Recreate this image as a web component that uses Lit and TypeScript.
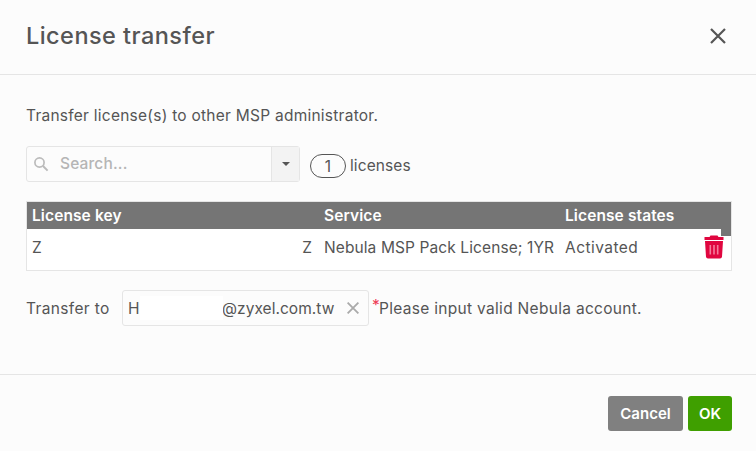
import { LitElement, css, html } from "lit";
import { customElement } from "lit/decorators.js";

@customElement("app-root")
export class AppRoot extends LitElement {
  render() {
    return html`
      <div class="dialog">
        <header class="dialog__header">
          <h1 class="dialog__title">License transfer</h1>
          <svg class="dialog__close" width="18" height="18" viewBox="0 0 18 18">
            <path d="M2 2L16 16M16 2L2 16" stroke="#555" stroke-width="2.2" fill="none" />
          </svg>
        </header>
        <main class="dialog__body">
          <p class="intro">Transfer license(s) to other MSP administrator.</p>
          <div class="filter">
            <div class="search">
              <div class="search__field">
                <svg width="16" height="16" viewBox="0 0 16 16">
                  <circle cx="6.5" cy="6.5" r="4.6" stroke="#bbb" stroke-width="1.7" fill="none" />
                  <path d="M10 10L14.6 14.6" stroke="#bbb" stroke-width="2" fill="none" />
                </svg>
                <span class="search__placeholder">Search...</span>
              </div>
              <div class="search__toggle"><span class="caret"></span></div>
            </div>
            <span class="count">1</span>
            <span class="count-label">licenses</span>
          </div>
          <div class="table">
            <div class="table__head">
              <span>License key</span>
              <span>Service</span>
              <span>License states</span>
            </div>
            <div class="table__row">
              <span class="key"><span>Z</span><span>Z</span></span>
              <span>Nebula MSP Pack License; 1YR</span>
              <span class="state">Activated</span>
              <svg class="trash" width="20" height="24" viewBox="0 0 20 24">
                <path
                  fill="#e0063f"
                  d="M6.5 0.5h7l1 1.5h5v3H0.5V2h5zM1 6h18l-1 15.8a2 2 0 0 1-2 1.7H4a2 2 0 0 1-2-1.7z"
                />
                <path d="M6.3 10v9.5M10 10v9.5M13.7 10v9.5" stroke="#f47c9b" stroke-width="1.6" fill="none" />
              </svg>
            </div>
            <span class="table__notch"></span>
          </div>
          <div class="transfer">
            <span class="transfer__label">Transfer to</span>
            <div class="transfer__input">
              <span class="transfer__name">H</span>
              <span class="transfer__mask"></span>
              <span class="transfer__domain">@zyxel.com.tw</span>
              <svg width="12" height="12" viewBox="0 0 12 12">
                <path d="M0.6 0.6L11.4 11.4M11.4 0.6L0.6 11.4" stroke="#aaa" stroke-width="1.8" fill="none" />
              </svg>
            </div>
            <span class="transfer__hint"><span class="required">*</span>Please input valid Nebula account.</span>
          </div>
        </main>
        <footer class="dialog__footer">
          <button class="btn btn--cancel">Cancel</button>
          <button class="btn btn--ok">OK</button>
        </footer>
      </div>
    `;
  }

  static styles = css`
    :host {
      display: block;
      font-family: "Inter", "Liberation Sans", sans-serif;
      color: #555;
    }

    .dialog {
      width: 756px;
      height: 451px;
      background: #fcfcfc;
      display: flex;
      flex-direction: column;
      box-sizing: border-box;
    }

    .dialog__header {
      height: 75px;
      box-sizing: border-box;
      border-bottom: 1px solid #e5e5e5;
      padding: 0 29px 3px 26px;
      display: flex;
      align-items: center;
      justify-content: space-between;
    }

    .dialog__title {
      margin: 0;
      font-size: 23.5px;
      font-weight: 500;
      letter-spacing: 0.45px;
      color: #555;
    }

    .dialog__body {
      flex: 1;
      padding: 31px 24px 0 26px;
      font-size: 15.5px;
      letter-spacing: 0.25px;
    }

    .intro {
      margin: 0;
      height: 20px;
      line-height: 20px;
    }

    .filter {
      margin-top: 20px;
      display: flex;
      align-items: center;
      height: 36px;
    }

    .search {
      width: 274px;
      height: 36px;
      box-sizing: border-box;
      border: 1px solid #e5e5e5;
      border-radius: 3px;
      display: flex;
    }

    .search__field {
      flex: 1;
      display: flex;
      align-items: center;
      gap: 11px;
      padding-left: 6px;
    }

    .search__placeholder {
      color: #b5b5b5;
      font-weight: 500;
      letter-spacing: 0.15px;
      position: relative;
      top: -1px;
    }

    .search__toggle {
      width: 27px;
      background: #f3f3f3;
      border-left: 1px solid #e5e5e5;
      display: flex;
      align-items: center;
      justify-content: center;
    }

    .caret {
      border-left: 4px solid transparent;
      border-right: 4px solid transparent;
      border-top: 4px solid #555;
    }

    .count {
      margin-left: 10px;
      width: 36px;
      height: 24px;
      box-sizing: border-box;
      border: 1px solid #555;
      border-radius: 12px;
      text-align: center;
      line-height: 24px;
      margin-top: 3px;
    }

    .count-label {
      margin-left: 4px;
      margin-top: 3px;
      letter-spacing: 0.1px;
    }

    .table {
      position: relative;
      margin-top: 19px;
      width: 706px;
      height: 70px;
      box-sizing: border-box;
      border: 1px solid #e5e5e5;
      background: #fff;
    }

    .table__head,
    .table__row {
      display: grid;
      grid-template-columns: 292px 241px 1fr;
      padding: 0 0 0 5px;
      letter-spacing: 0.1px;
    }

    .table__head {
      height: 27px;
      align-items: center;
      background: #757575;
      color: #fff;
      font-weight: 600;
    }

    .table__row {
      position: relative;
      height: 36px;
      align-items: center;
      color: #555;
    }

    .key {
      display: flex;
      justify-content: space-between;
      padding-right: 12px;
    }

    .state {
      letter-spacing: 0.45px;
    }

    .trash {
      position: absolute;
      top: 6px;
      right: 7px;
    }

    .table__notch {
      position: absolute;
      top: 27px;
      right: 0;
      width: 10px;
      height: 7px;
      background: #757575;
    }

    .transfer {
      margin-top: 19px;
      display: flex;
      align-items: center;
    }

    .transfer__label {
      width: 96px;
      letter-spacing: 0.35px;
    }

    .transfer__input {
      position: relative;
      width: 247px;
      height: 36px;
      box-sizing: border-box;
      border: 1px solid #e5e5e5;
      border-radius: 3px;
      display: flex;
      align-items: center;
      padding: 0 9px 0 5px;
      letter-spacing: 0.05px;
    }

    .transfer__name {
      width: 94px;
    }

    .transfer__mask {
      position: absolute;
      left: 17px;
      top: 5px;
      width: 83px;
      height: 24px;
      background: #fff;
    }

    .transfer__domain {
      flex: 1;
    }

    .transfer__hint {
      margin-left: 3px;
      letter-spacing: 0.3px;
    }

    .required {
      color: #ee3a55;
      position: relative;
      top: -3px;
      margin-right: -1px;
    }

    .dialog__footer {
      height: 77px;
      box-sizing: border-box;
      border-top: 1px solid #e5e5e5;
      padding: 21px 24px 0 0;
      display: flex;
      justify-content: flex-end;
      gap: 5px;
    }

    .btn {
      height: 35px;
      border: 0;
      border-radius: 3px;
      color: #fff;
      font: 600 15px "Inter", "Liberation Sans", sans-serif;
      padding: 0;
    }

    .btn--cancel {
      width: 75px;
      background: #808080;
    }

    .btn--ok {
      width: 44px;
      background: #3f9f00;
    }
  `;
}
